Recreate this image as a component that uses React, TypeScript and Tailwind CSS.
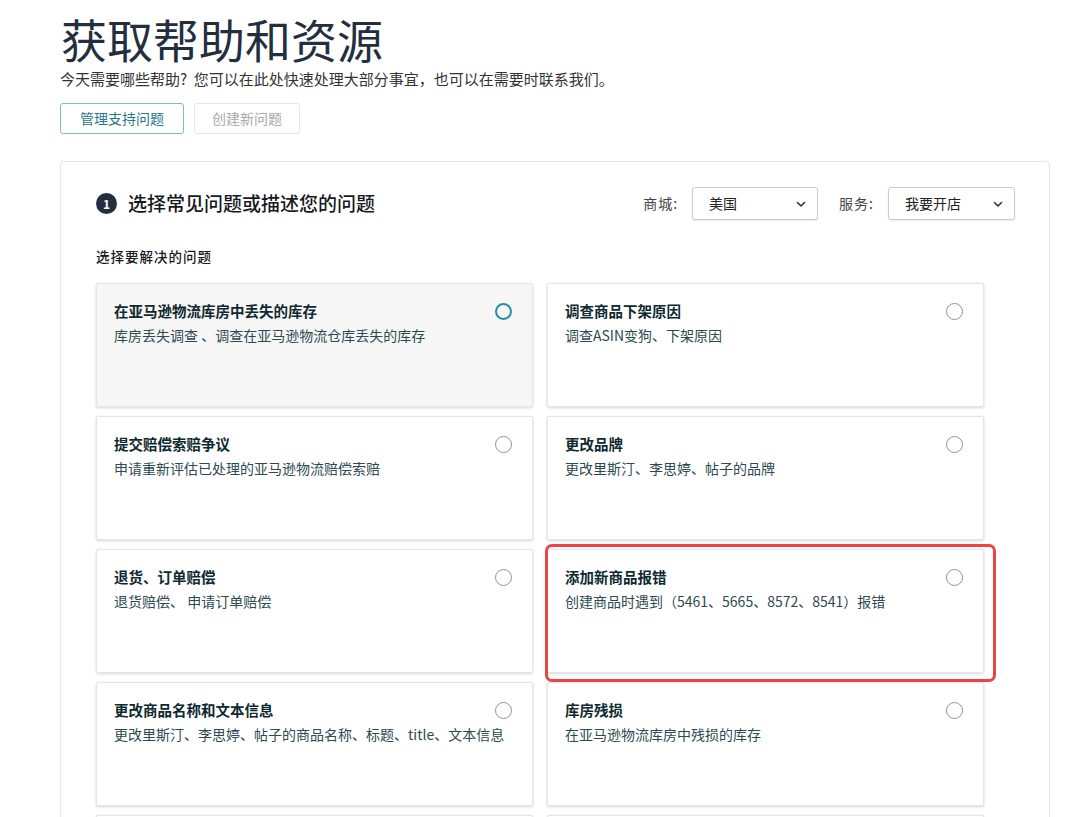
import React from "react";

const FONT = { fontFamily: '"Noto Sans CJK SC", "Noto Sans", sans-serif' };

type Item = { title: string; desc: string; selected?: boolean };

const items: Item[] = [
  { title: "在亚马逊物流库房中丢失的库存", desc: "库房丢失调查 、调查在亚马逊物流仓库丢失的库存", selected: true },
  { title: "调查商品下架原因", desc: "调查ASIN变狗、下架原因" },
  { title: "提交赔偿索赔争议", desc: "申请重新评估已处理的亚马逊物流赔偿索赔" },
  { title: "更改品牌", desc: "更改里斯汀、李思婷、帖子的品牌" },
  { title: "退货、订单赔偿", desc: "退货赔偿、 申请订单赔偿" },
  { title: "添加新商品报错", desc: "创建商品时遇到（5461、5665、8572、8541）报错" },
  { title: "更改商品名称和文本信息", desc: "更改里斯汀、李思婷、帖子的商品名称、标题、title、文本信息" },
  { title: "库房残损", desc: "在亚马逊物流库房中残损的库存" },
  { title: "", desc: "" },
  { title: "", desc: "" },
];

function Chevron() {
  return (
    <svg width="12" height="12" viewBox="0 0 12 12" fill="none">
      <path d="M2.5 4.5 L6 8 L9.5 4.5" stroke="#333" strokeWidth="1.6" strokeLinecap="round" strokeLinejoin="round" />
    </svg>
  );
}

function Select({ value, width }: { value: string; width: string }) {
  return (
    <div
      className={`flex h-[33px] items-center justify-between rounded-[3px] border border-[#c9cccf] bg-white pl-[16px] pr-[10px] text-[14px] text-[#222] shadow-[0_1px_2px_rgba(0,0,0,0.08)] ${width}`}
    >
      <span>{value}</span>
      <Chevron />
    </div>
  );
}

function Card({ item }: { item: Item }) {
  return (
    <div
      className={`relative h-[124px] rounded-[2px] border border-[#e3e5e6] pl-[17px] pr-[20px] pt-[16px] shadow-[0_1px_3px_rgba(0,0,0,0.16)] ${
        item.selected ? "bg-[#f6f6f6]" : "bg-white"
      }`}
    >
      <div className="pr-[30px] text-[14.5px] font-bold leading-[22px] text-[#0e2a30]">{item.title}</div>
      <div className="mt-[3px] whitespace-nowrap text-[14px] leading-[20px] text-[#2d4a50]">{item.desc}</div>
      <div
        className={`absolute right-[20px] top-[19px] h-[17px] w-[17px] rounded-full ${
          item.selected ? "border-[2px] border-[#2b8ea0]" : "border-[1.5px] border-[#8e9297]"
        }`}
      />
    </div>
  );
}

export default function App() {
  return (
    <div className="h-[817px] w-[1080px] overflow-hidden bg-white" style={FONT}>
      <div className="pl-[60px] pt-[12px]">
        <h1 className="pl-[1px] text-[46px] font-normal leading-[52px] text-[#232f3e]">获取帮助和资源</h1>
        <p className="mt-[5px] text-[15px] leading-[20px] text-[#333]">
          今天需要哪些帮助?&nbsp; 您可以在此处快速处理大部分事宜，也可以在需要时联系我们。
        </p>
        <div className="mt-[14px] flex gap-[10px]">
          <div className="flex h-[31px] w-[124px] items-center justify-center rounded-[3px] border border-[#7fbcc7] text-[14px] text-[#1f7a8a]">
            管理支持问题
          </div>
          <div className="flex h-[31px] w-[106px] items-center justify-center rounded-[3px] border border-[#e6e6e6] text-[14px] text-[#a9a9a9]">
            创建新问题
          </div>
        </div>

        <div className="relative mt-[27px] w-[990px] rounded-[4px] border border-[#e6e6e6] pb-[40px] pl-[35px] pr-[34px] pt-[25px] shadow-[0_0_2px_rgba(0,0,0,0.06)]">
          <div className="flex items-center justify-between">
            <div className="flex items-center gap-[11px]">
              <div className="flex h-[21px] w-[21px] items-center justify-center rounded-full bg-[#232f3e] text-[12px] font-bold leading-none text-white">
                1
              </div>
              <div className="text-[19px] font-medium text-[#16191f]">选择常见问题或描述您的问题</div>
            </div>
            <div className="flex items-center">
              <span className="mr-[14px] text-[14px] tracking-[1px] text-[#444]">商城:</span>
              <Select value="美国" width="w-[126px]" />
              <span className="ml-[21px] mr-[14px] text-[14px] tracking-[1px] text-[#444]">服务:</span>
              <Select value="我要开店" width="w-[127px]" />
            </div>
          </div>

          <div className="mt-[26px] text-[13.5px] font-medium leading-[20px] tracking-[1px] text-[#16191f]">选择要解决的问题</div>

          <div className="mt-[17px] grid w-[888px] grid-cols-2 gap-x-[14px] gap-y-[9px]">
            {items.map((it, i) => (
              <Card key={i} item={it} />
            ))}
          </div>

          <div className="pointer-events-none absolute left-[484px] top-[382px] h-[138px] w-[451px] rounded-[7px] border-[3px] border-[#ec4343]" />
        </div>
      </div>
    </div>
  );
}
